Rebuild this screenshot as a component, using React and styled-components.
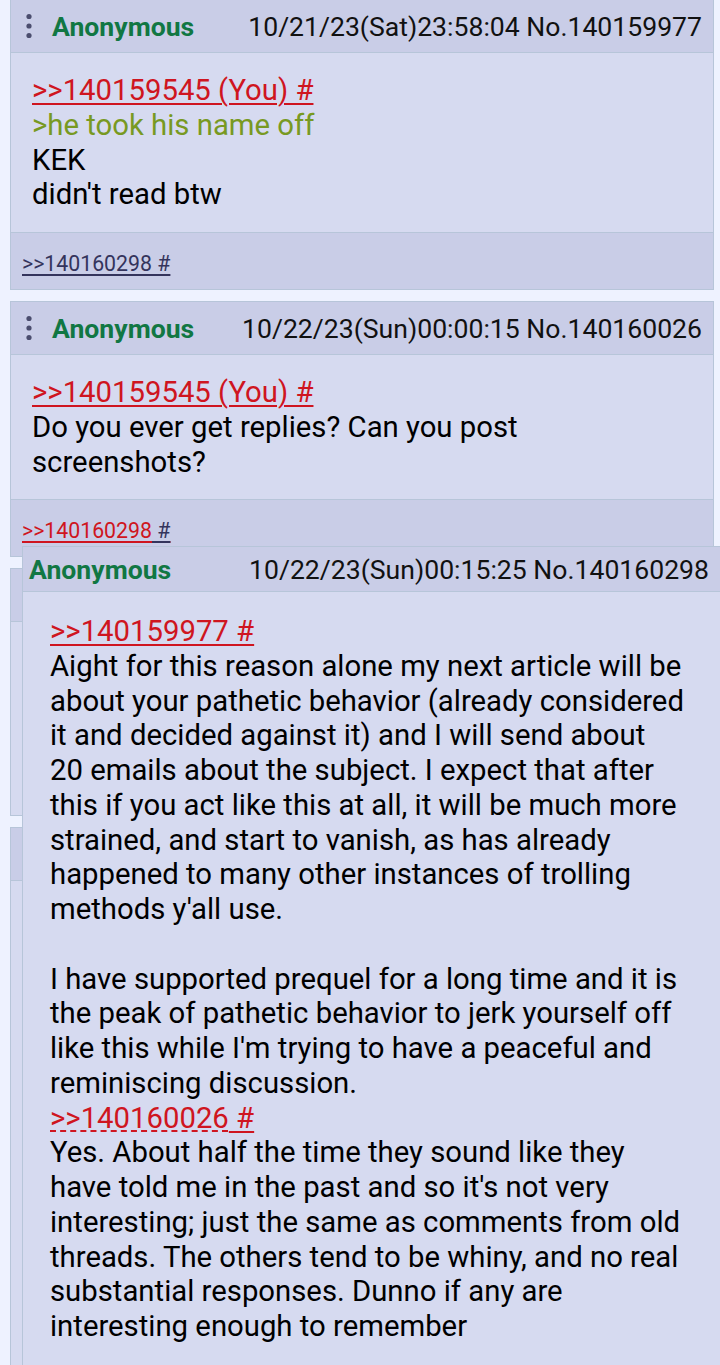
import React from "react";
import styled, { createGlobalStyle } from "styled-components";

const GlobalStyle = createGlobalStyle`
  html, body {
    margin: 0;
    padding: 0;
    background: #eef2ff;
    font-family: Roboto, "Noto Sans", "Liberation Sans", sans-serif;
    color: #000;
    overflow: hidden;
  }
`;

const Page = styled.div`
  position: relative;
  margin-top: -1px;
  padding: 0 6px 0 10px;
  height: 1366px;
  overflow: hidden;
`;

const Thread = styled.div`
  display: flex;
  flex-direction: column;
  gap: 11px;
`;

const PostBox = styled.article`
  background: #d6daf0;
  border: 1px solid #b7c5d9;
  display: flex;
  flex-direction: column;
`;

const Header = styled.header`
  display: flex;
  align-items: center;
  justify-content: space-between;
  height: ${(p) => p.$h || 52}px;
  padding: 0 ${(p) => p.$pr || 11}px 0 ${(p) => p.$pl || 14}px;
  background: #c9cde7;
  border-bottom: 1px solid #b7c5d9;
  font-size: 26.6px;
  white-space: nowrap;
`;

const NameGroup = styled.div`
  display: flex;
  align-items: center;
  gap: 19px;
`;

const Name = styled.span`
  color: #117743;
  font-weight: 700;
`;

const DateText = styled.span`
  color: #111;
`;

const Body = styled.div`
  padding: ${(p) => p.$pt || 20}px 20px 20px ${(p) => p.$pl || 21}px;
  font-size: 29.3px;
  line-height: 34.75px;
  white-space: nowrap;
  min-height: ${(p) => p.$minH || 0}px;
`;

const Line = styled.div`
  min-height: 34.75px;
  color: ${(p) => (p.$green ? "#789922" : "#000")};
`;

const Quote = styled.a`
  color: #cf1520;
  text-decoration: underline;
  text-decoration-style: ${(p) => (p.$dashed ? "dashed" : "solid")};
  text-decoration-thickness: 2px;
  text-underline-offset: 3px;
`;

const Footer = styled.footer`
  display: flex;
  align-items: center;
  height: 52px;
  padding: 4px 0 0 11px;
  background: #c9cde7;
  border-top: 1px solid #b7c5d9;
  font-size: 21.3px;
`;

const Backlink = styled.a`
  color: ${(p) => (p.$red ? "#cf1520" : "#34345c")};
  text-decoration: underline;
  text-underline-offset: 3px;
`;

const Popup = styled.div`
  position: absolute;
  top: 547px;
  left: 22px;
  width: 699px;
  bottom: -2px;
  box-sizing: border-box;
  background: #d6daf0;
  border: 1px solid #b7c5d9;
`;

const MenuDots = () => (
  <svg width="8" height="26" viewBox="0 0 8 26" aria-hidden="true">
    <circle cx="4" cy="3.5" r="2.6" fill="#4b4d6e" />
    <circle cx="4" cy="13" r="2.6" fill="#4b4d6e" />
    <circle cx="4" cy="22.5" r="2.6" fill="#4b4d6e" />
  </svg>
);

const Post = ({ date, children, footer }) => (
  <PostBox>
    <Header>
      <NameGroup>
        <MenuDots />
        <Name>Anonymous</Name>
      </NameGroup>
      <DateText>{date}</DateText>
    </Header>
    <Body>{children}</Body>
    {footer && <Footer>{footer}</Footer>}
  </PostBox>
);

/* posts further down the thread, hidden under the hover preview */
const CoveredPost = ({ bodyMinH }) => (
  <PostBox>
    <Header />
    <Body $minH={bodyMinH} />
  </PostBox>
);

export default function App() {
  return (
    <>
      <GlobalStyle />
      <Page>
        <Thread>
          <Post
            date="10/21/23(Sat)23:58:04 No.140159977"
            footer={<Backlink>&gt;&gt;140160298 #</Backlink>}
          >
            <Line>
              <Quote>&gt;&gt;140159545 (You) #</Quote>
            </Line>
            <Line $green>&gt;he took his name off</Line>
            <Line>KEK</Line>
            <Line>didn't read btw</Line>
          </Post>
          <Post
            date="10/22/23(Sun)00:00:15 No.140160026"
            footer={
              <Backlink $red>
                &gt;&gt;140160298<Backlink> #</Backlink>
              </Backlink>
            }
          >
            <Line>
              <Quote>&gt;&gt;140159545 (You) #</Quote>
            </Line>
            <Line>Do you ever get replies? Can you post</Line>
            <Line>screenshots?</Line>
          </Post>
          <CoveredPost bodyMinH={153} />
          <CoveredPost bodyMinH={700} />
        </Thread>
        <Popup>
          <Header $h={44} $pl={6} $pr={11}>
            <Name>Anonymous</Name>
            <DateText>10/22/23(Sun)00:15:25 No.140160298</DateText>
          </Header>
          <Body $pl={27} $pt={22}>
            <Line>
              <Quote>&gt;&gt;140159977 #</Quote>
            </Line>
            <Line>Aight for this reason alone my next article will be</Line>
            <Line>about your pathetic behavior (already considered</Line>
            <Line>it and decided against it) and I will send about</Line>
            <Line>20 emails about the subject. I expect that after</Line>
            <Line>this if you act like this at all, it will be much more</Line>
            <Line>strained, and start to vanish, as has already</Line>
            <Line>happened to many other instances of trolling</Line>
            <Line>methods y'all use.</Line>
            <Line />
            <Line>I have supported prequel for a long time and it is</Line>
            <Line>the peak of pathetic behavior to jerk yourself off</Line>
            <Line>like this while I'm trying to have a peaceful and</Line>
            <Line>reminiscing discussion.</Line>
            <Line>
              <Quote $dashed>&gt;&gt;140160026</Quote>
              <Quote> #</Quote>
            </Line>
            <Line>Yes. About half the time they sound like they</Line>
            <Line>have told me in the past and so it's not very</Line>
            <Line>interesting; just the same as comments from old</Line>
            <Line>threads. The others tend to be whiny, and no real</Line>
            <Line>substantial responses. Dunno if any are</Line>
            <Line>interesting enough to remember</Line>
          </Body>
        </Popup>
      </Page>
    </>
  );
}
